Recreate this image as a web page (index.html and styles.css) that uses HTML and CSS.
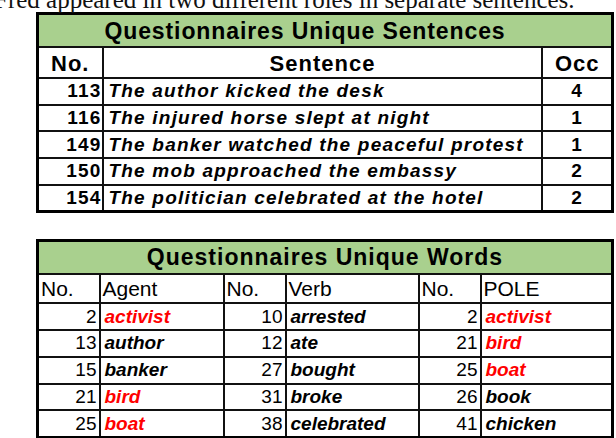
FILE: index.html
```html
<!DOCTYPE html>
<html>
<head>
<meta charset="utf-8">
<link rel="stylesheet" href="styles.css">
</head>
<body>
<div class="page">
  <p class="intro">Fred appeared in two different roles in separate sentences.</p>

  <table class="tbl sent">
    <colgroup><col class="c-no"><col class="c-sent"><col class="c-occ"></colgroup>
    <tr class="title"><th colspan="3">Questionnaires Unique Sentences</th></tr>
    <tr class="head"><th>No.</th><th>Sentence</th><th>Occ</th></tr>
    <tr><td class="num">113</td><td class="txt">The author kicked the desk</td><td class="occ">4</td></tr>
    <tr><td class="num">116</td><td class="txt">The injured horse slept at night</td><td class="occ">1</td></tr>
    <tr><td class="num">149</td><td class="txt">The banker watched the peaceful protest</td><td class="occ">1</td></tr>
    <tr><td class="num">150</td><td class="txt">The mob approached the embassy</td><td class="occ">2</td></tr>
    <tr><td class="num">154</td><td class="txt">The politician celebrated at the hotel</td><td class="occ">2</td></tr>
  </table>

  <table class="tbl words">
    <colgroup><col class="w1"><col class="w2"><col class="w3"><col class="w4"><col class="w5"><col class="w6"></colgroup>
    <tr class="title"><th colspan="6">Questionnaires Unique Words</th></tr>
    <tr class="head"><th>No.</th><th>Agent</th><th>No.</th><th>Verb</th><th>No.</th><th>POLE</th></tr>
    <tr><td class="num">2</td><td class="wd red">activist</td><td class="num">10</td><td class="wd">arrested</td><td class="num">2</td><td class="wd red">activist</td></tr>
    <tr><td class="num">13</td><td class="wd">author</td><td class="num">12</td><td class="wd">ate</td><td class="num">21</td><td class="wd red">bird</td></tr>
    <tr><td class="num">15</td><td class="wd">banker</td><td class="num">27</td><td class="wd">bought</td><td class="num">25</td><td class="wd red">boat</td></tr>
    <tr><td class="num">21</td><td class="wd red">bird</td><td class="num">31</td><td class="wd">broke</td><td class="num">26</td><td class="wd">book</td></tr>
    <tr><td class="num">25</td><td class="wd red">boat</td><td class="num">38</td><td class="wd">celebrated</td><td class="num">41</td><td class="wd">chicken</td></tr>
  </table>
</div>
</body>
</html>
```

FILE: styles.css
```css
html, body {
  margin: 0;
  padding: 0;
  background: #ffffff;
  overflow: hidden;
}

.page {
  width: 616px;
  height: 438px;
  overflow: hidden;
}

.intro {
  margin: -13px 0 0 -6px;
  font-family: "Liberation Serif", "Times New Roman", serif;
  font-size: 25px;
  line-height: 25px;
  height: 25px;
  color: #111;
  white-space: nowrap;
}

.tbl {
  border-collapse: collapse;
  margin-left: 36px;
  width: 578px;
  table-layout: fixed;
  font-family: "Liberation Sans", Arial, sans-serif;
  color: #000;
  border: 3px solid #000;
}

.tbl th, .tbl td {
  border: 2px solid #111;
  padding: 0;
  white-space: nowrap;
  overflow: hidden;
}

.sent {
  margin-top: 0;
}

.c-no { width: 65px; }
.c-occ { width: 70px; }

.tbl .title th {
  background: #a9d08e;
  font-weight: bold;
  text-align: center;
}

.sent .title th {
  height: 29px;
  padding-top: 2px;
  font-size: 23px;
  letter-spacing: 0.9px;
  padding-right: 40px;
}

.sent .head th {
  height: 26px;
  padding-top: 3px;
  font-size: 22px;
  letter-spacing: 1px;
  font-weight: bold;
  text-align: center;
}

.sent td {
  height: 24.7px;
  font-size: 19px;
  font-weight: bold;
  letter-spacing: 1.2px;
}

.sent .num {
  text-align: right;
  padding-right: 0;
}

.sent .txt {
  font-style: italic;
  padding-left: 5px;
}

.sent .occ {
  text-align: center;
}

.words {
  margin-top: 26px;
}

.w1 { width: 62px; }
.w2 { width: 124px; }
.w3 { width: 62px; }
.w4 { width: 133px; }
.w5 { width: 62px; }

.words .title th {
  height: 31px;
  font-size: 23px;
  letter-spacing: 1px;
}

.words .head th {
  height: 26px;
  padding-top: 1px;
  font-size: 21px;
  font-weight: normal;
  text-align: left;
  padding-left: 2px;
}

.words td {
  height: 24.7px;
  font-size: 19px;
}

.words .num {
  text-align: right;
  padding-right: 2px;
}

.words .wd {
  font-style: italic;
  font-weight: bold;
  padding-left: 4px;
}

.words .red {
  color: #ff0000;
}
```
